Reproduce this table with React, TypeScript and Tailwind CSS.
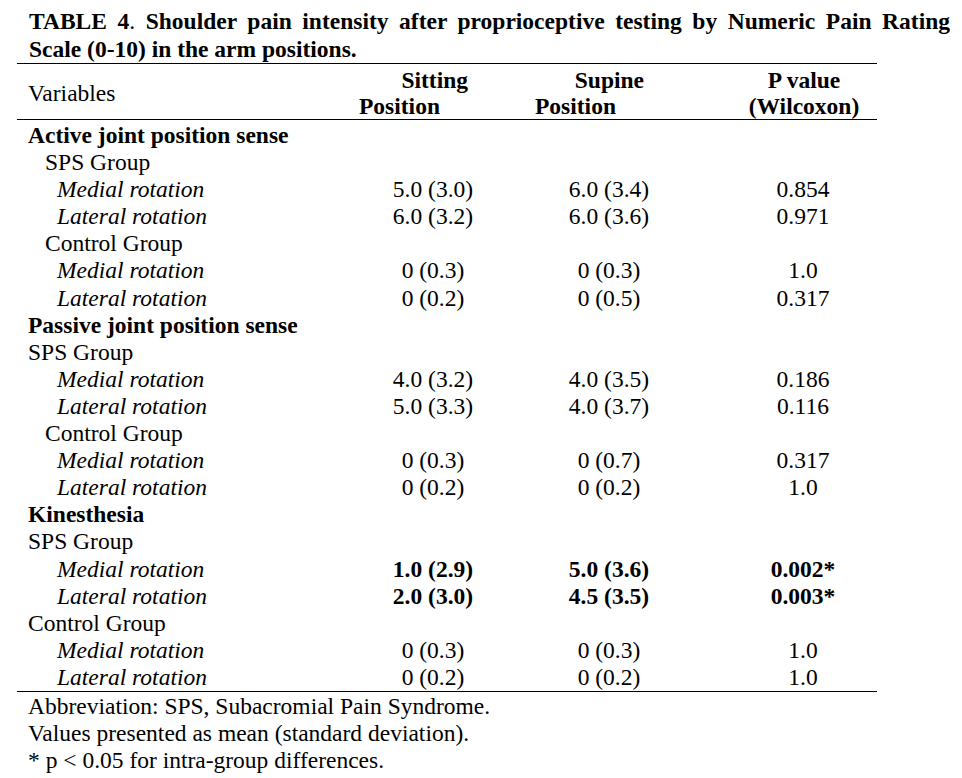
type Row = {
  label: string;
  kind: "section" | "group" | "item";
  indent: number;
  values?: [string, string, string];
  bold?: boolean;
};

const rows: Row[] = [
  { label: "Active joint position sense", kind: "section", indent: 11 },
  { label: "SPS Group", kind: "group", indent: 28 },
  { label: "Medial rotation", kind: "item", indent: 40, values: ["5.0 (3.0)", "6.0 (3.4)", "0.854"] },
  { label: "Lateral rotation", kind: "item", indent: 40, values: ["6.0 (3.2)", "6.0 (3.6)", "0.971"] },
  { label: "Control Group", kind: "group", indent: 28 },
  { label: "Medial rotation", kind: "item", indent: 40, values: ["0 (0.3)", "0 (0.3)", "1.0"] },
  { label: "Lateral rotation", kind: "item", indent: 40, values: ["0 (0.2)", "0 (0.5)", "0.317"] },
  { label: "Passive joint position sense", kind: "section", indent: 11 },
  { label: "SPS Group", kind: "group", indent: 11 },
  { label: "Medial rotation", kind: "item", indent: 40, values: ["4.0 (3.2)", "4.0 (3.5)", "0.186"] },
  { label: "Lateral rotation", kind: "item", indent: 40, values: ["5.0 (3.3)", "4.0 (3.7)", "0.116"] },
  { label: "Control Group", kind: "group", indent: 28 },
  { label: "Medial rotation", kind: "item", indent: 40, values: ["0 (0.3)", "0 (0.7)", "0.317"] },
  { label: "Lateral rotation", kind: "item", indent: 40, values: ["0 (0.2)", "0 (0.2)", "1.0"] },
  { label: "Kinesthesia", kind: "section", indent: 11 },
  { label: "SPS Group", kind: "group", indent: 11 },
  { label: "Medial rotation", kind: "item", indent: 40, values: ["1.0 (2.9)", "5.0 (3.6)", "0.002*"], bold: true },
  { label: "Lateral rotation", kind: "item", indent: 40, values: ["2.0 (3.0)", "4.5 (3.5)", "0.003*"], bold: true },
  { label: "Control Group", kind: "group", indent: 11 },
  { label: "Medial rotation", kind: "item", indent: 40, values: ["0 (0.3)", "0 (0.3)", "1.0"] },
  { label: "Lateral rotation", kind: "item", indent: 40, values: ["0 (0.2)", "0 (0.2)", "1.0"] },
];

function TableRow({ row }: { row: Row }) {
  const labelClass =
    row.kind === "section" ? "font-bold" : row.kind === "item" ? "italic" : "";
  return (
    <div className="grid grid-cols-[360px_112px_240px_148px] leading-[27.1px]">
      <div className={`whitespace-nowrap ${labelClass}`} style={{ paddingLeft: row.indent }}>
        {row.label}
      </div>
      {row.values?.map((v, i) => (
        <div key={i} className={`text-center whitespace-nowrap ${row.bold ? "font-bold" : ""}`}>
          {v}
        </div>
      ))}
    </div>
  );
}

export default function App() {
  return (
    <div className="w-[962px] h-[778px] bg-white text-black font-['Liberation_Serif','Times_New_Roman',serif] overflow-hidden">
      <div className="ml-[29px] w-[921px] pt-[8px] font-bold text-[23.5px] leading-[27.5px]">
        <div className="text-justify [text-align-last:justify] whitespace-nowrap">
          TABLE 4<span className="font-normal">.</span> Shoulder pain intensity after proprioceptive testing by Numeric Pain Rating
        </div>
        <div>Scale (0-10) in the arm positions.</div>
      </div>

      <div className="ml-[17px] w-[860px] text-[23.5px]">
        <div className="border-t border-black" />
        <div className="flex items-center pt-[2.5px] pb-[0.5px] leading-[26px]">
          <div className="w-[342px] pl-[11px]">Variables</div>
          <div className="w-[109px] flex flex-col font-bold">
            <span className="text-right">Sitting</span>
            <span className="text-left whitespace-nowrap">Position</span>
          </div>
          <div className="ml-[67px] w-[109px] flex flex-col font-bold">
            <span className="text-right">Supine</span>
            <span className="text-left whitespace-nowrap">Position</span>
          </div>
          <div className="ml-[104px] w-[112px] flex flex-col font-bold text-center whitespace-nowrap">
            <span>P value</span>
            <span>(Wilcoxon)</span>
          </div>
        </div>
        <div className="border-t border-black" />
        <div className="pt-[2px]">
          {rows.map((r, i) => (
            <TableRow key={i} row={r} />
          ))}
        </div>
        <div className="border-t border-black" />
        <div className="pt-[1px] pl-[11px] leading-[27px]">
          <div>Abbreviation: SPS, Subacromial Pain Syndrome.</div>
          <div>Values presented as mean (standard deviation).</div>
          <div>* p &lt; 0.05 for intra-group differences.</div>
        </div>
      </div>
    </div>
  );
}
